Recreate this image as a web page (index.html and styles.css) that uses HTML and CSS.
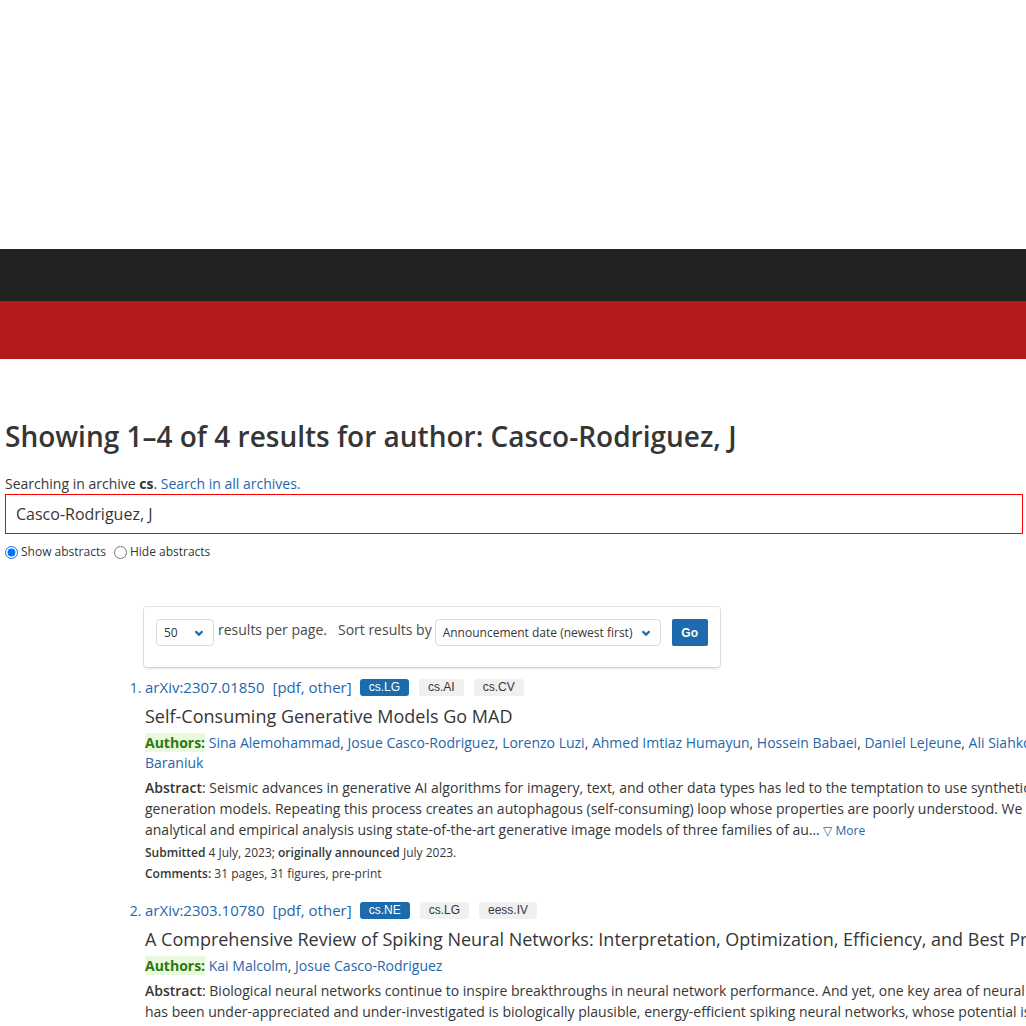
FILE: index.html
```html
<!DOCTYPE html>
<html lang="en">
<head>
<meta charset="utf-8">
<title>Search | arXiv e-print repository</title>
<link rel="stylesheet" href="styles.css">
</head>
<body>
<div class="banner-space"></div>
<header class="topbar"></header>
<div class="redbar"></div>
<main class="content">
  <h1 class="title">Showing 1&ndash;4 of 4 results for author: Casco-Rodriguez, J</h1>
  <p class="archive-note">Searching in archive <strong>cs</strong>. <a href="#">Search in all archives.</a></p>
  <div class="query-box">Casco-Rodriguez, J</div>
  <div class="abstract-toggle">
    <label class="radio"><input type="radio" name="abs" checked> Show abstracts</label>
    <label class="radio"><input type="radio" name="abs"> Hide abstracts</label>
  </div>

  <div class="results-wrap">
    <div class="box">
      <div class="select"><span>50</span><svg class="chev" viewBox="0 0 10 8"><path d="M1.5 2.2 L5 5.6 L8.5 2.2" fill="none" stroke="#1c6bad" stroke-width="2.2"/></svg></div>
      <span class="ctl-label">results per page.</span>
      <span class="ctl-label sort">Sort results by</span>
      <div class="select wide"><span>Announcement date (newest first)</span><svg class="chev" viewBox="0 0 10 8"><path d="M1.5 2.2 L5 5.6 L8.5 2.2" fill="none" stroke="#1c6bad" stroke-width="2.2"/></svg></div>
      <button class="go">Go</button>
    </div>

    <ol class="results">
      <li class="result">
        <div class="result-head">
          <a href="#">arXiv:2307.01850</a>
          <span class="formats">[<a href="#">pdf</a>, <a href="#">other</a>]</span>
          <span class="tag primary">cs.LG</span>
          <span class="tag">cs.AI</span>
          <span class="tag">cs.CV</span>
        </div>
        <p class="r-title">Self-Consuming Generative Models Go MAD</p>
        <p class="authors"><span class="hit">Authors:</span> <a href="#">Sina Alemohammad</a>, <a href="#">Josue Casco-Rodriguez</a>, <a href="#">Lorenzo Luzi</a>, <a href="#">Ahmed Imtiaz Humayun</a>, <a href="#">Hossein Babaei</a>, <a href="#">Daniel LeJeune</a>, <a href="#">Ali Siahkoohi</a>, <a href="#">Richard G. Baraniuk</a></p>
        <p class="abstract"><span class="label">Abstract</span>: Seismic advances in generative AI algorithms for imagery, text, and other data types has led to the temptation to use synthetic data to train next-generation models. Repeating this process creates an autophagous (self-consuming) loop whose properties are poorly understood. We conduct a thorough analytical and empirical analysis using state-of-the-art generative image models of three families of au&hellip; <a class="more" href="#">&#9661;&nbsp;More</a></p>
        <p class="meta"><span class="label">Submitted</span> 4 July, 2023; <span class="label">originally announced</span> July 2023.</p>
        <p class="meta"><span class="label">Comments:</span> 31 pages, 31 figures, pre-print</p>
      </li>
      <li class="result">
        <div class="result-head">
          <a href="#">arXiv:2303.10780</a>
          <span class="formats">[<a href="#">pdf</a>, <a href="#">other</a>]</span>
          <span class="tag primary">cs.NE</span>
          <span class="tag">cs.LG</span>
          <span class="tag">eess.IV</span>
        </div>
        <p class="r-title">A Comprehensive Review of Spiking Neural Networks: Interpretation, Optimization, Efficiency, and Best Practices</p>
        <p class="authors"><span class="hit">Authors:</span> <a href="#">Kai Malcolm</a>, <a href="#">Josue Casco-Rodriguez</a></p>
        <p class="abstract"><span class="label">Abstract</span>: Biological neural networks continue to inspire breakthroughs in neural network performance. And yet, one key area of neural computation that has been under-appreciated and under-investigated is biologically plausible, energy-efficient spiking neural networks, whose potential is especially attractive for low-power, mobile, or other hardware-constrained settings.</p>
      </li>
    </ol>
  </div>
</main>
</body>
</html>
```

FILE: styles.css
```css
html, body {
  margin: 0;
  padding: 0;
  overflow: hidden;
  background: #fff;
}
body {
  font-family: "Open Sans", "Liberation Sans", sans-serif;
  color: #363636;
  width: 1026px;
}
a {
  color: #1f66ac;
  text-decoration: none;
}
.banner-space {
  height: 249px;
}
.topbar {
  height: 52px;
  background: #222222;
}
.redbar {
  height: 58px;
  background: #b31b1b;
}
.content {
  padding: 0 3px 0 5px;
}
.title {
  margin: 61px 0 0;
  font-size: 28px;
  font-weight: 600;
  line-height: 32px;
  color: #363636;
}
.archive-note {
  margin: 21px 0 0;
  font-size: 14px;
  line-height: 21px;
}
.archive-note strong {
  font-weight: 700;
}
.query-box {
  margin-top: 0;
  height: 38px;
  border: 1px solid #ff0000;
  padding-left: 10px;
  font-size: 16px;
  line-height: 38px;
  color: #363636;
  box-sizing: content-box;
}
.abstract-toggle {
  display: flex;
  gap: 8px;
  margin-top: 9px;
  font-size: 12px;
  line-height: 18px;
}
.radio {
  display: flex;
  align-items: center;
  gap: 3px;
}
.radio input {
  margin: 0;
  width: 13px;
  height: 13px;
}
.results-wrap {
  margin: 46px 0 0 139px;
  width: 1015px;
}
.box {
  width: 553px;
  padding: 12px 11px 21px 12px;
  border-radius: 3px;
  box-shadow: 0 2px 3px rgba(10, 10, 10, 0.1), 0 0 0 1px rgba(10, 10, 10, 0.1);
  display: flex;
  align-items: flex-start;
  font-size: 14px;
  line-height: 21px;
  margin-bottom: 9px;
  color: #4a4a4a;
}
.select {
  height: 25px;
  border: 1px solid #dbdbdb;
  border-radius: 4px;
  display: flex;
  align-items: center;
  justify-content: space-between;
  padding: 0 9px 0 7px;
  width: 40px;
  font-size: 12px;
  color: #363636;
}
.select.wide {
  width: 208px;
  font-size: 12px;
}
.chev {
  width: 10px;
  height: 8px;
}
.ctl-label {
  margin-left: 4px;
  margin-top: 0;
}
.ctl-label.sort {
  margin-left: 11px;
  margin-right: 3px;
}
.go {
  margin-left: 11px;
  height: 27px;
  width: 36px;
  border: none;
  border-radius: 2px;
  background: #1c6bad;
  color: #fff;
  font-family: "Liberation Sans", Arial, sans-serif;
  font-size: 12px;
  font-weight: 700;
  padding: 0;
}
.results {
  margin: 0;
  padding: 0 0 0 1px;
  list-style-position: outside;
  list-style-type: decimal;
}
.result {
  margin-left: 0;
  margin-bottom: 16px;
}
.result::marker {
  color: #1f66ac;
  font-size: 14px;
}
.result-head {
  display: flex;
  align-items: center;
  font-size: 15px;
  line-height: 22px;
  color: #1f66ac;
}
.formats {
  margin-left: 8px;
}
.tag {
  font-family: "Liberation Sans", Arial, sans-serif;
  font-size: 12px;
  line-height: 17px;
  height: 17px;
  padding: 0 9px;
  border-radius: 3px;
  background: #f0f0f0;
  color: #363636;
  margin-left: 10px;
}
.tag.primary {
  background: #1c6bad;
  color: #fff;
  margin-left: 8px;
}
.r-title {
  margin: 5px 0 0;
  font-size: 18px;
  line-height: 26px;
  color: #363636;
}
.authors {
  margin: 4px 0 0;
  font-size: 14px;
  line-height: 20px;
}
.hit {
  font-weight: 700;
  color: #2a7a15;
  background: #e9f9dc;
}
.abstract {
  margin: 4px 0 0;
  font-size: 14px;
  line-height: 21px;
  color: #363636;
}
.label {
  font-weight: 600;
  color: #363636;
}
.more {
  font-size: 12px;
}
.meta {
  margin: 2px 0 0;
  font-size: 12px;
  line-height: 19px;
}
.meta + .meta {
  margin-top: 2px;
}
```
